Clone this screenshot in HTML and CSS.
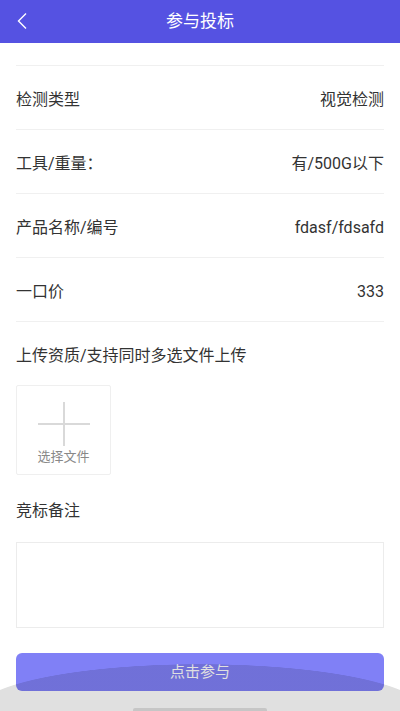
FILE: index.html
```html
<!DOCTYPE html>
<html lang="zh">
<head>
  <meta charset="UTF-8">
  <title>参与投标</title>
  <link rel="stylesheet" href="styles.css">
</head>
<body>
  <div class="header">
    <span class="back">
      <svg width="12" height="18" viewBox="0 0 12 18"><path d="M10 1.5 L2.5 9 L10 16.5" fill="none" stroke="#fff" stroke-width="1.4"/></svg>
    </span>
    <span class="title">参与投标</span>
  </div>

  <div class="form">
    <div class="spacer"></div>

    <div class="row">
      <span class="label">检测类型</span>
      <span class="value">视觉检测</span>
    </div>
    <div class="row">
      <span class="label">工具/重量：</span>
      <span class="value">有/500G以下</span>
    </div>
    <div class="row">
      <span class="label">产品名称/编号</span>
      <span class="value">fdasf/fdsafd</span>
    </div>
    <div class="row">
      <span class="label">一口价</span>
      <span class="value">333</span>
    </div>

    <div class="section-title">上传资质/支持同时多选文件上传</div>
    <div class="upload">
      <svg width="54" height="44" viewBox="0 0 54 44"><path d="M27 0 V44 M1 22 H53" stroke="#d9d9d9" stroke-width="2"/></svg>
      <span class="upload-text">选择文件</span>
    </div>

    <div class="section-title remark-title">竞标备注</div>
    <textarea class="remark"></textarea>

    <button class="submit">点击参与</button>
  </div>

  <div class="sheet"></div>
  <div class="home-bar"></div>
</body>
</html>
```

FILE: styles.css
```css
* {
  box-sizing: border-box;
}

body {
  font-family: Roboto, "Noto Sans CJK SC", sans-serif;
  background-color: #fff;
  color: #333;
  margin: 0;
  padding: 0;
  width: 400px;
  height: 711px;
  overflow: hidden;
  position: relative;
}

.header {
  height: 43px;
  background-color: #5552e2;
  display: flex;
  align-items: center;
  justify-content: center;
  position: relative;
}

.back {
  position: absolute;
  left: 16px;
  top: 12px;
  display: flex;
}

.title {
  color: #fff;
  font-size: 17px;
  line-height: 1;
}

.form {
  padding: 0 16px;
}

.spacer {
  height: 23px;
  border-bottom: 1px solid #f0f0f0;
}

/* baseline keeps latin values level with the chinese labels */
.row {
  height: 64px;
  padding-top: 23px;
  display: flex;
  align-items: baseline;
  justify-content: space-between;
  border-bottom: 1px solid #f0f0f0;
  font-size: 16px;
  line-height: 22px;
}

.label {
  color: #333;
}

.value {
  color: #333;
}

.section-title {
  font-size: 16px;
  line-height: 22px;
  margin-top: 23px;
}

.upload {
  width: 95px;
  height: 90px;
  margin-top: 18px;
  border: 1px solid #efefef;
  border-radius: 2px;
  display: flex;
  flex-direction: column;
  align-items: center;
  padding-top: 16px;
}

.upload-text {
  font-size: 13px;
  color: #888;
  line-height: 16px;
  margin-top: 3px;
}

.remark-title {
  margin-top: 25px;
}

.remark {
  display: block;
  width: 100%;
  height: 86px;
  margin-top: 20px;
  border: 1px solid #ececec;
  resize: none;
  outline: none;
}

.submit {
  display: block;
  width: 100%;
  height: 38px;
  margin-top: 25px;
  border: none;
  border-radius: 6px;
  background-color: #8080f6;
  color: #fff;
  font-family: Roboto, "Noto Sans CJK SC", sans-serif;
  font-size: 15px;
  padding: 0 0 3px;
}

/* bottom sheet peeking over the page */
.sheet {
  position: absolute;
  left: 0;
  bottom: 0;
  width: 400px;
  height: 47px;
  background: radial-gradient(ellipse 225px 47px at 50% 100%, rgba(0, 0, 0, 0.12) 99%, transparent 100%);
}

.home-bar {
  position: absolute;
  left: 133px;
  bottom: 0;
  width: 134px;
  height: 3px;
  background-color: #c6c6c6;
  border-radius: 2px 2px 0 0;
}
```
